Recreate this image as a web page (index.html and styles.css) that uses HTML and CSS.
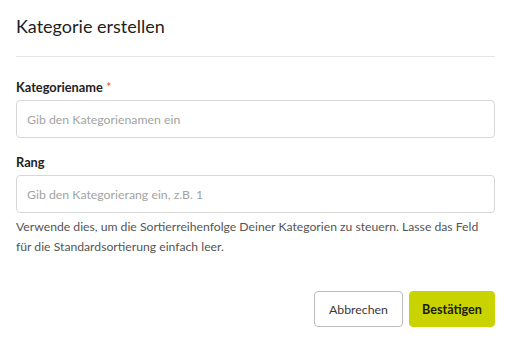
FILE: index.html
```html
<!DOCTYPE html>
<html lang="de">
<head>
<meta charset="utf-8">
<link rel="stylesheet" href="styles.css">
</head>
<body>
<div class="dialog">
  <div class="header">
    <h1 class="title">Kategorie erstellen</h1>
  </div>
  <form class="form">
    <label class="label" for="name">Kategoriename <span class="req">*</span></label>
    <input class="input" id="name" type="text" placeholder="Gib den Kategorienamen ein">
    <label class="label label-gap" for="rank">Rang</label>
    <input class="input" id="rank" type="text" placeholder="Gib den Kategorierang ein, z.B. 1">
    <p class="help">Verwende dies, um die Sortierreihenfolge Deiner Kategorien zu steuern. Lasse das Feld für die Standardsortierung einfach leer.</p>
    <div class="actions">
      <button type="button" class="btn btn-secondary">Abbrechen</button>
      <button type="button" class="btn btn-primary">Bestätigen</button>
    </div>
  </form>
</div>
</body>
</html>
```
FILE: styles.css
```css
*{box-sizing:border-box;}
html,body{margin:0;padding:0;background:#fff;}
body{font-family:Lato,"Liberation Sans",sans-serif;color:#222;}
.dialog{padding:0 17px 0 16px;}
.header{padding:14px 0 18px;border-bottom:1px solid #e6e6e6;}
.title{margin:0;font-size:18px;line-height:24px;font-weight:400;color:#1e1e1e;}
.form{display:flex;flex-direction:column;padding-top:21px;}
.label{font-size:12.8px;line-height:18px;font-weight:700;color:#222;margin-bottom:4px;}
.label-gap{margin-top:15px;}
.req{color:#ee5a3c;font-weight:400;}
.input{height:38px;width:100%;border:1px solid #d7d7d7;border-radius:4px;padding:0 10px;font-family:inherit;font-size:12.3px;color:#222;background:#fff;outline:none;}
.input::placeholder{color:#a3a3a3;}
.help{margin:4px 0 0;font-size:12.2px;line-height:20px;color:#555;}
.actions{display:flex;justify-content:flex-end;gap:6px;margin-top:34px;}
.btn{height:36px;border-radius:4px;font-family:inherit;font-size:12.3px;padding:0 10px;cursor:pointer;}
.btn-secondary{background:#fff;border:1px solid #bdbdbd;color:#3a3a3a;width:89px;}
.btn-primary{background:#c9d300;border:1px solid #c9d300;color:#1c1c00;font-weight:700;font-size:12.6px;width:86px;}
```
